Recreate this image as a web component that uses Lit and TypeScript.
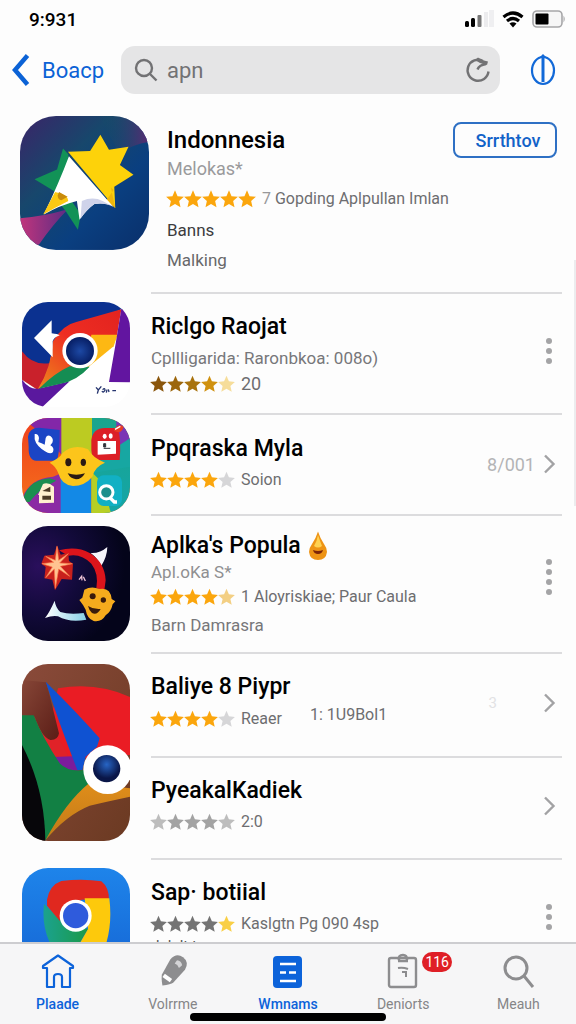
import { LitElement, html, css, svg, nothing, TemplateResult } from "lit";
import { customElement, property } from "lit/decorators.js";

const GOLD = "#fba60d";
const PALE = "#d6d6d8";
const FADED = "#f6dd9a";
const GREY = "#a3a3a3";
const DARK = "#747474";

const STAR = "M9 .8 11.4 6.3 17.4 6.9 12.9 10.9 14.2 16.8 9 13.7 3.8 16.8 5.1 10.9 .6 6.9 6.6 6.3Z";

/* ---------- artwork ---------- */

const starburstArt = html`<svg class="art" viewBox="60 48 390 405" aria-hidden="true">
  <defs>
    <linearGradient id="g" x1="0" y1="0" x2="1" y2="1">
      <stop offset="0" stop-color="#3b2468" /><stop offset=".35" stop-color="#17476c" />
      <stop offset=".65" stop-color="#0a3f80" /><stop offset="1" stop-color="#0a2f6a" />
    </linearGradient>
    <linearGradient id="p" x1="0" y1="0" x2="1" y2="0">
      <stop offset="0" stop-color="#c1357c" /><stop offset="1" stop-color="#5c2c84" />
    </linearGradient>
    <linearGradient id="t" x1="0" y1="0" x2="1" y2="0">
      <stop offset="0" stop-color="#0e5560" stop-opacity="0" /><stop offset="1" stop-color="#5a2a72" />
    </linearGradient>
  </defs>
  <rect x="60" y="48" width="390" height="405" fill="url(#g)" />
  <path d="M300 48H450V126Q400 135 360 160Z" fill="url(#t)" />
  <path d="M60 357Q130 352 205 330Q160 375 118 436L80 453H60Z" fill="url(#p)" />
  <path d="M190 146 206 164 212 300 244 345 235 392 198 335 170 300 165 276 104 239 172 210Z" fill="#129257" />
  <path d="M205 156 272 154 303 105 329 150 388 141 362 196 403 226 345 262 348 326Z" fill="#fdd20a" />
  <path d="M335 264 348 326 320 304 343 272Z" fill="#eeb60c" />
  <path d="M208 170 342 322Q318 308 285 314Q262 330 240 362L232 305Q180 318 132 346Q178 250 208 170Z" fill="#fff" />
  <path d="M247 305Q280 290 310 305L342 322Q310 308 285 314Q262 330 243 358Z" fill="#cfd3ea" />
  <path d="M166 278Q205 285 206 305Q166 325 130 346Z" fill="#fbc914" />
  <path d="M178 278 204 292 185 303Q174 300 174 288Z" fill="#c98b0b" />
</svg>`;

const arrowArt = html`<svg class="art" viewBox="37 22 324 315" aria-hidden="true">
  <defs>
    <linearGradient id="f" x1="1" y1="0" x2="0" y2="1">
      <stop offset="0" stop-color="#e2231f" /><stop offset=".5" stop-color="#ee2d22" /><stop offset="1" stop-color="#ee8a1c" />
    </linearGradient>
    <radialGradient id="e"><stop offset="0" stop-color="#1d49a5" /><stop offset="1" stop-color="#071e64" /></radialGradient>
  </defs>
  <rect x="37" y="22" width="324" height="315" fill="#fff" />
  <path d="M37 22H361V60L335 44 130 140 120 215H37Z" fill="#0b3190" />
  <path d="M37 170Q70 215 122 205L90 290 37 255Z" fill="#c9212b" />
  <path d="M37 255Q60 285 85 282L180 260 98 337H37Z" fill="#5a189e" />
  <path d="M335 44 322 122 220 225 85 282Q125 220 130 140Q160 90 200 82Z" fill="url(#f)" />
  <path d="M245 120H324L312 155 225 226Z" fill="#fdb813" />
  <path d="M88 282Q135 235 180 215L240 216Q200 260 150 268Z" fill="#158d53" />
  <path d="M335 42 361 55V263L298 262Q318 150 335 42Z" fill="#6215a0" />
  <path d="M73 130 126 77V116Q145 118 150 122 132 128 129 140V188Z" fill="#fff" />
  <circle cx="211" cy="168" r="53" fill="#fff" /><circle cx="211" cy="169" r="42" fill="url(#e)" />
  <path d="M259 278 266 286 275 275M266 286 263 297M279 285Q286 278 286 287 280 296 277 289M292 285 290 294M296 284 298 292M308 288H319" fill="none" stroke="#26356f" stroke-width="4" />
</svg>`;

const mosaicArt = html`<svg class="art" viewBox="37 24 324 285" aria-hidden="true">
  <defs>
    <linearGradient id="o" x1="0" y1="0" x2="0" y2="1"><stop offset="0" stop-color="#ef3f1d" /><stop offset="1" stop-color="#f5731b" /></linearGradient>
    <linearGradient id="q" x1="0" y1="0" x2="0" y2="1"><stop offset="0" stop-color="#1aa58d" /><stop offset="1" stop-color="#14a5a8" /></linearGradient>
  </defs>
  <rect x="37" y="24" width="324" height="285" fill="url(#o)" />
  <path d="M37 24H160V140L120 90Z" fill="#8327a8" />
  <rect x="155" y="24" width="92" height="120" fill="#bccb22" />
  <path d="M247 24H361V309H247Z" fill="url(#q)" />
  <path d="M320 24H361V90L320 150Z" fill="#7a37b5" />
  <path d="M361 85V170L250 190 260 150Z" fill="#17a7a2" />
  <path d="M37 265Q60 205 130 200L155 190V309H37Z" fill="#8b2ba4" />
  <path d="M37 280Q50 210 120 205L140 212Q90 235 60 275Z" fill="#1b8f50" />
  <rect x="153" y="205" width="92" height="104" fill="#1389e6" />
  <path d="M245 185 300 240Q290 280 305 309H245Z" fill="#b7cf25" />
  <rect x="262" y="196" width="75" height="92" rx="20" fill="#12b0c4" />
  <path d="M55 80Q60 50 95 54L150 60Q150 140 140 152H80Q55 150 57 110Z" fill="#1b45c5" />
  <path d="M245 90Q250 52 290 54H325Q335 90 330 150H270Q245 150 245 120Z" fill="#dc1f26" />
  <path d="M120 158Q150 145 158 130Q190 100 235 118Q250 145 286 158Q255 170 248 200Q225 228 190 228Q155 225 146 190Q140 170 120 158Z" fill="#fcc51b" />
  <ellipse cx="176" cy="157" rx="9" ry="12" fill="#2a1a14" /><ellipse cx="221" cy="157" rx="8" ry="11" fill="#2a1a14" />
  <path d="M174 190Q200 198 226 190Q216 208 199 208 182 206 174 190Z" fill="#2a1a14" />
  <path d="M75 72Q86 70 88 84L86 96Q96 100 105 104L108 84Q112 74 122 78Q133 86 128 98L122 106Q135 112 130 126Q122 134 106 124Q80 108 75 88Z" fill="#fff" />
  <path d="M264 93H319V131L264 134Z" fill="#fff" />
  <path d="M282 101h6v10h-6zM282 115H302" stroke="#30333a" stroke-width="3" fill="#30333a" />
  <ellipse cx="285" cy="79" rx="6" ry="8" fill="#fff" /><ellipse cx="303" cy="78" rx="6" ry="8" fill="#fff" />
  <path d="M312 62Q325 38 342 50Q335 75 312 62Z" fill="#e83c25" /><path d="M316 58 332 49" stroke="#fff" stroke-width="4" />
  <path d="M100 222Q115 215 133 230V278L88 280V255H85Z" fill="#fff1cf" />
  <path d="M98 243 122 230V246ZM98 257H124V269H98Z" fill="#4c3b26" />
  <circle cx="290" cy="247" r="20" fill="#1c8f8b" stroke="#fff" stroke-width="9" /><path d="M300 262 314 276H322" stroke="#fff" stroke-width="10" fill="none" />
</svg>`;

const orbitArt = html`<svg class="art" viewBox="37 17 324 345" aria-hidden="true">
  <defs>
    <radialGradient id="n" cx=".15" cy=".35" r=".8"><stop offset="0" stop-color="#2a0f5c" /><stop offset=".5" stop-color="#120a3a" /><stop offset="1" stop-color="#04041a" /></radialGradient>
    <linearGradient id="w" x1="0" y1="0" x2="1" y2="0"><stop offset="0" stop-color="#fff" /><stop offset="1" stop-color="#86cfe6" /></linearGradient>
  </defs>
  <rect x="37" y="17" width="324" height="345" fill="url(#n)" />
  <path d="M243 98Q270 100 293 80Q292 110 275 136Q262 112 243 98Z" fill="#f6f4fb" />
  <path d="M148 90Q200 76 240 98Q285 125 288 180L284 210 260 204Q268 160 245 130Q215 98 175 106Z" fill="#dc141b" />
  <path d="M106 293Q120 275 135 241Q138 262 152 275Q180 284 222 278L230 298Q180 308 145 288Q128 285 106 293Z" fill="url(#w)" />
  <path d="M142 75 153 103 176 98 178 122 190 130 187 178 156 176 136 210 128 178 104 174 108 140 95 130 104 106 133 103Z" fill="#c8201c" />
  <path d="M142 78 147 120 176 100 150 128 188 130 152 138 180 168 147 146 137 204 134 146 108 172 128 140 97 130 132 126 108 108 137 120Z" fill="#ffc391" stroke="#ff7d4b" stroke-width="2" />
  <path d="M208 178 216 168 217 180M221 169 227 182" fill="none" stroke="#efc4d6" stroke-width="4" />
  <path d="M224 208Q245 196 270 206Q302 200 306 236L317 243 309 252Q304 275 288 285Q276 306 252 302Q232 294 228 268L220 254 209 239 218 232Z" fill="#f6ab1d" />
  <circle cx="249" cy="228" r="9" fill="#391b0c" /><circle cx="281" cy="239" r="8" fill="#391b0c" />
  <path d="M235 257Q252 268 273 266Q262 286 247 278 238 270 235 257Z" fill="#391b0c" />
</svg>`;

const birdArt = html`<svg class="art" viewBox="37 27 324 531" aria-hidden="true">
  <defs>
    <linearGradient id="b" x1="0" y1="0" x2="1" y2="1"><stop offset="0" stop-color="#8a4a3a" /><stop offset="1" stop-color="#6b3a22" /></linearGradient>
    <linearGradient id="m" x1="0" y1="0" x2="1" y2="1"><stop offset="0" stop-color="#864637" /><stop offset="1" stop-color="#5b1d16" /></linearGradient>
    <radialGradient id="i" cx=".5" cy=".35"><stop offset="0" stop-color="#2765c5" /><stop offset="1" stop-color="#0a1648" /></radialGradient>
    <linearGradient id="k" x1="0" y1="0" x2="0" y2="1"><stop offset="0" stop-color="#e08d1a" /><stop offset="1" stop-color="#c07a18" /></linearGradient>
  </defs>
  <rect x="37" y="27" width="324" height="531" fill="url(#b)" />
  <path d="M145 100Q260 80 361 126V300H250L160 340 110 245Z" fill="#ea1c24" />
  <path d="M75 185 110 290 160 340 175 300 145 245Z" fill="#e02228" />
  <path d="M37 75 110 82 148 235Q145 256 122 255Q95 245 75 185L37 180Z" fill="url(#m)" />
  <path d="M130 306 188 304 210 346Q170 352 150 335Z" fill="#7c1c9c" />
  <path d="M37 181H72Q100 250 150 325Q175 352 225 345L245 392 107 556 37 400Z" fill="#128044" />
  <path d="M108 80Q200 170 270 250L262 275 228 305 218 345H203Q150 210 108 80Z" fill="#0f52d2" />
  <path d="M37 270Q105 400 107 558H37Z" fill="#07060a" />
  <path d="M107 556Q170 440 238 385L361 400V425Q290 440 240 452Q170 480 107 556Z" fill="url(#k)" />
  <circle cx="294" cy="344" r="73" fill="#fff" /><circle cx="291" cy="341" r="41" fill="url(#i)" />
</svg>`;

const wheelArt = html`<svg class="art" viewBox="37 37 324 324" aria-hidden="true">
  <defs>
    <linearGradient id="s" x1="0" y1="0" x2="0" y2="1"><stop offset="0" stop-color="#1e84ea" /><stop offset="1" stop-color="#1565d4" /></linearGradient>
    <linearGradient id="v" x1="0" y1="0" x2="1" y2="0"><stop offset="0" stop-color="#1ba28f" /><stop offset="1" stop-color="#1b9a48" /></linearGradient>
  </defs>
  <rect x="37" y="37" width="324" height="324" fill="url(#s)" />
  <path d="M103 145 160 200 235 220 205 270H125Q95 215 103 145Z" fill="url(#v)" />
  <path d="M112 132Q120 88 155 76Q220 68 275 77Q298 95 298 132H215L150 195 112 150Z" fill="#e0281f" />
  <path d="M225 128H299Q308 200 290 262L282 290H195L235 220Z" fill="#fdc90c" />
  <circle cx="198" cy="180" r="48" fill="#fff" /><circle cx="198" cy="180" r="38" fill="#2f5bdc" />
</svg>`;

/* ---------- data ---------- */

interface Entry {
  title: string;
  drop?: boolean;
  sub?: string;
  stars: string[];
  meta: string;
  extra?: string;
  note?: string;
  peek?: string;
  tail: "dots3" | "dots4" | "chevron";
  hint?: string;
  faint?: boolean;
  look: string;
}

interface Group { art: TemplateResult; shape: string; entries: Entry[] }

const groups: Group[] = [
  { art: arrowArt, shape: "a", entries: [
    { title: "Riclgo Raojat", sub: "Cpllligarida: Raronbkoa: 008o)", stars: ["#8a560c", "#9c660c", "#a8720d", "#d0910f", FADED], meta: "20", tail: "dots3", look: "tall" } ] },
  { art: mosaicArt, shape: "b", entries: [
    { title: "Ppqraska Myla", stars: [GOLD, GOLD, GOLD, GOLD, PALE], meta: "Soion", tail: "chevron", hint: "8/001", look: "short" } ] },
  { art: orbitArt, shape: "c", entries: [
    { title: "Aplka's Popula", drop: true, sub: "Apl.oKa S*", stars: [GOLD, GOLD, GOLD, GOLD, "#f3cf83"], meta: "1 Aloyriskiae; Paur Caula", note: "Barn Damrasra", tail: "dots4", look: "dense" } ] },
  { art: birdArt, shape: "d", entries: [
    { title: "Baliye 8 Piypr", stars: [GOLD, GOLD, GOLD, GOLD, PALE], meta: "Reaer", extra: "1: 1U9Bol1", tail: "chevron", hint: "3", faint: true, look: "plain" },
    { title: "PyeakalKadiek", stars: ["#bdbdbd", GREY, GREY, GREY, "#bdbdbd"], meta: "2:0", tail: "chevron", look: "plain" } ] },
  { art: wheelArt, shape: "e", entries: [
    { title: "Sap· botiial", stars: [DARK, DARK, DARK, DARK, "#f9cf45"], meta: "Kaslgtn Pg 090 4sp", peek: "dulult tr ·", tail: "dots3", look: "plain" } ] },
];

@customElement("star-row")
class StarRow extends LitElement {
  @property({ attribute: false }) colors: string[] = [];
  static styles = css`
    :host { display: flex; flex: none; }
    svg { display: block; width: var(--star, 17px); height: 18px; }
  `;
  render() {
    return this.colors.map((c) => html`<svg viewBox="0.5 0.5 17 17" aria-hidden="true">${svg`<path d=${STAR} fill=${c} />`}</svg>`);
  }
}

@customElement("app-art")
class AppArt extends LitElement {
  @property({ attribute: false }) art: unknown = nothing;
  static styles = css`
    :host { display: block; }
    .art { display: block; width: 100%; border-radius: var(--corner, 26px); overflow: hidden; }
  `;
  render() { return this.art; }
}

@customElement("app-root")
class AppRoot extends LitElement {
  static styles = css`
    :host { display: flex; flex-direction: column; height: 100vh; position: relative; overflow: hidden;
      background: #fdfdfd; color: #000; font-family: Roboto, "Liberation Sans", sans-serif; }
    * { box-sizing: border-box; }
    button { font: inherit; border: 0; background: none; padding: 0; cursor: pointer; color: inherit; }
    svg { display: block; flex: none; }
    h1, h2, p { margin: 0; font-weight: 400; }

    .status { display: flex; align-items: center; justify-content: space-between; height: 38px; padding: 0 10px 0 29px; }
    .time { font-size: 19px; font-weight: 500; }
    .signals { display: flex; align-items: center; gap: 8px; }

    .nav { display: flex; align-items: center; height: 64px; padding: 0 20px 0 11px; }
    .back { display: flex; align-items: center; gap: 12px; width: 110px; color: #0b62d6; font-size: 22px; }
    .search { flex: 1; min-width: 0; display: flex; align-items: center; gap: 9px; height: 48px; padding: 0 9px 0 13px;
      border-radius: 14px; background: #e5e5e6; color: #727274; }
    .search input { flex: 1; min-width: 0; border: 0; outline: 0; background: none; padding: 0; font: inherit; font-size: 22px; color: #727274; }
    .info { margin-left: 30px; color: #1269d8; }

    main { flex: 1; min-height: 0; overflow: hidden; }
    .hero { display: flex; gap: 18px; padding: 14px 19px 17px 20px; }
    .hero app-art { width: 129px; flex: none; --corner: 36px; }
    .hero .body { flex: 1; min-width: 0; padding-top: 9px; font-size: 17px; line-height: 30px; }
    .hero h1 { font-size: 24px; font-weight: 500; }
    .hero .sub { font-size: 18px; line-height: 28px; color: #9a9a9c; }
    .hero .meta { --star: 18px; line-height: 32px; }
    .hero .dark { color: #3c3c3e; }
    .hero .mid { color: #68686a; }
    .get { align-self: flex-start; width: 104px; height: 36px; margin-top: 6px; padding-left: 6px; border: 2px solid #2e70c4;
      border-radius: 8px; color: #1262c8; font-size: 18px; font-weight: 500; }
    .meta { display: flex; align-items: center; gap: 6px; margin-left: -1px; font-size: 16px; color: #6d6d70; white-space: nowrap; }
    .meta .light { color: #98989a; }
    .rule { margin: 0 14px 0 151px; height: 2px; background: #dcdcde; }

    .group { display: grid; grid-template-columns: 108px 1fr; column-gap: 21px; padding: 0 14px 0 22px; align-items: start; }
    .group app-art { margin-top: 8px; }
    .b app-art { margin-top: 3px; }
    .c app-art, .d app-art { margin-top: 10px; }
    .entry { display: flex; align-items: center; border-bottom: 2px solid #dcdcde; padding: 19px 6px 23px 0; }
    .entry .text { flex: 1; min-width: 0; font-size: 17px; line-height: 26px; }
    .entry h2 { font-size: 23px; font-weight: 500; line-height: 28px; margin-bottom: 4px; display: flex; align-items: center; gap: 7px; white-space: nowrap; }
    .tall { padding: 19px 6px 16px 0; }
    .tall .meta { font-size: 18px; }
    .short { padding: 20px 6px 21px 0; }
    .dense { padding: 15px 6px 13px 0; }
    .dense h2 { margin: 0; }
    .dense .sub { line-height: 22px; color: #8f8f91; }
    .dense .meta, .dense .note { line-height: 28px; }
    .sub, .note { color: #77777a; }
    .peek { font-size: 15px; line-height: 18px; color: #555; }
    .extra { margin-left: 22px; line-height: 20px; padding-bottom: 14px; margin-bottom: -6px; }
    .tail { display: flex; align-items: center; gap: 7px; color: #a0a0a2; }
    .tall .tail { margin-bottom: 8px; }
    .dense .tail { margin-bottom: 16px; }
    .hint { font-size: 18px; color: #b4b4b6; }
    .faint { font-size: 15px; color: #e2e2e4; margin-right: 38px; }

    .tabs { position: relative; display: grid; grid-template-columns: repeat(5, 1fr); height: 82px; border-top: 2px solid #cdcdd0; background: #f6f6f7; }
    .tab { display: flex; flex-direction: column; align-items: center; gap: 5px; padding-top: 8px; font-size: 14px; line-height: 18px; color: #858587; text-decoration: none; }
    .tab.on { color: #0c63da; font-weight: 500; }
    .glyph { position: relative; }
    .badge { position: absolute; left: 36px; top: 0; width: 30px; height: 20px; border-radius: 10px; background: #df1f26; color: #fff; font-size: 14px; line-height: 20px; text-align: center; }
    .home { position: absolute; left: 50%; bottom: 3px; width: 196px; height: 8px; transform: translateX(-50%); border-radius: 4px; background: #000; }
    .scroll { position: absolute; right: 0; top: 260px; width: 2px; height: 246px; background: #ececee; }
  `;

  private tail(e: Entry) {
    if (e.tail === "chevron") {
      return html`<button class="tail" aria-label="Open">
        ${e.hint ? html`<span class=${e.faint ? "faint" : "hint"}>${e.hint}</span>` : nothing}
        <svg width="14" height="20" viewBox="0 0 14 20" fill="none" stroke="#a2a2a4" stroke-width="2.4"><path d="M3 1.5 11.5 10 3 18.5" /></svg>
      </button>`;
    }
    const n = e.tail === "dots4" ? 4 : 3;
    const h = n * 10;
    return html`<button class="tail" aria-label="More">
      <svg width="14" height=${h} viewBox="0 0 14 ${h}" fill="#a4a4a6">${Array.from({ length: n }, (_, i) => svg`<circle cx="7" cy=${5 + i * 10} r="3" />`)}</svg>
    </button>`;
  }

  private entry(e: Entry) {
    return html`<article class="entry ${e.look}">
      <div class="text">
        <h2>${e.title}${e.drop ? html`<svg width="20" height="30" viewBox="0 0 20 30"><path d="M10 .5Q12 7 16 13 19 17 19 21 18 29 10 29 2 29 1 21 1 17 4 13 8 7 10 .5Z" fill="#ee9415" /><path d="M10 4Q12 10 14 15 10 18 6 15 9 10 10 4Z" fill="#ffd252" /><path d="M5 19Q10 21 15 19 14 23 10 23 6 23 5 19Z" fill="#7c2508" /></svg>` : nothing}</h2>
        ${e.sub ? html`<p class="sub">${e.sub}</p>` : nothing}
        <div class="meta"><star-row .colors=${e.stars}></star-row><span>${e.meta}</span>${e.extra ? html`<span class="extra">${e.extra}</span>` : nothing}</div>
        ${e.note ? html`<p class="note">${e.note}</p>` : nothing}
        ${e.peek ? html`<p class="peek">${e.peek}</p>` : nothing}
      </div>
      ${this.tail(e)}
    </article>`;
  }

  render() {
    return html`
      <div class="status">
        <span class="time">9:931</span>
        <div class="signals">
          <svg width="30" height="18" viewBox="0 0 30 18"><rect x="1" y="11" width="4" height="6" rx="1.5" /><rect x="7" y="8" width="4" height="9" rx="1.5" /><rect x="13.5" y="5" width="4" height="12" rx="1" fill="#777" /><rect x="20" y="2" width="4" height="15" fill="#ececee" /><rect x="25" y="0" width="5" height="17" fill="#efeff1" /></svg>
          <svg width="22" height="17" viewBox="0 0 22 17" fill="none" stroke="#000" stroke-width="3.2"><path d="M1.5 6Q11-2 20.5 6M5 10Q11 5 17 10" /><path d="M7.5 12.5Q11 10 14.5 12.5L11 16.5Z" fill="#000" stroke="none" /></svg>
          <svg width="34" height="18" viewBox="0 0 34 18"><rect x="1" y="1" width="29" height="16" rx="4" fill="#f6f6f6" stroke="#a6a6a8" stroke-width="1.6" /><rect x="3.5" y="3.5" width="13" height="11" rx="1" /><path d="M31.5 5.5Q34 9 31.5 12.5Z" fill="#a6a6a8" /></svg>
        </div>
      </div>
      <nav class="nav">
        <button class="back"><svg width="19" height="34" viewBox="0 0 19 34" fill="none" stroke="currentColor" stroke-width="4.5"><path d="M16.5 2.5 4 17 16.5 31.5" /></svg>Boacp</button>
        <label class="search">
          <svg width="24" height="24" viewBox="0 0 24 24" fill="none" stroke="currentColor" stroke-width="2.4"><circle cx="10" cy="10" r="8" /><path d="M16 16 22.5 22.5" /></svg>
          <input type="text" value="apn" aria-label="Search" />
          <svg width="26" height="26" viewBox="0 0 26 26" fill="none" stroke="currentColor" stroke-width="2.4"><path d="M23.5 14.5A10.5 10.5 0 1 1 18 4" /><path d="M12.5 12.5Q14 8 21 7" /><path d="M10 3 13 .5 17 3 23 4.5 22 8 15 6Z" fill="currentColor" stroke="none" /></svg>
        </label>
        <button class="info" aria-label="Info"><svg width="26" height="34" viewBox="0 0 26 34" fill="none" stroke="currentColor" stroke-width="2.2"><ellipse cx="13" cy="17.5" rx="11" ry="13.5" /><path d="M13 3V29" stroke-width="3" /><path d="M9 5 13 1 17 5Z" fill="currentColor" stroke="none" /></svg></button>
      </nav>
      <main>
        <section class="hero">
          <app-art .art=${starburstArt}></app-art>
          <div class="body">
            <h1>Indonnesia</h1>
            <p class="sub">Melokas*</p>
            <div class="meta"><star-row .colors=${Array(5).fill(GOLD)}></star-row><span><span class="light">7</span> Gopding Aplpullan Imlan</span></div>
            <p class="dark">Banns</p>
            <p class="mid">Malking</p>
          </div>
          <button class="get">Srrthtov</button>
        </section>
        <div class="rule"></div>
        ${groups.map((g) => html`<section class="group ${g.shape}"><app-art .art=${g.art}></app-art><div>${g.entries.map((e) => this.entry(e))}</div></section>`)}
      </main>
      <nav class="tabs">
        <a class="tab on" href="#home"><svg width="34" height="38" viewBox="0 0 34 38" fill="none" stroke="currentColor" stroke-width="2.2"><path d="M6 16H2V14L17 3.5 32 14V16H29V35H21V25Q21 22 17 22 13 22 13 25V35H6Z" stroke-linejoin="round" /></svg>Plaade</a>
        <a class="tab" href="#tools"><svg width="34" height="38" viewBox="0 0 34 38"><g transform="rotate(36 17 19)"><path d="M8 11Q9 2 17 2 25 2 26 11L24 28Q23 31 17 37 11 31 10 28Z" fill="#8d8d8f" /><path d="M12 26H21V30H12Z" fill="#fff" /><path d="M14 8Q18 6 21 9L20 13Q17 11 14 12Z" fill="#d4d4d6" /></g></svg>Volrrme</a>
        <a class="tab on" href="#list"><svg width="34" height="38" viewBox="0 0 34 38"><rect x="2" y="4" width="29" height="32" rx="4" fill="#0c63da" /><path d="M9 12H25M9 20.5H15M18 20.5H25M9 29H25" stroke="#fff" stroke-width="2.6" /></svg>Wmnams</a>
        <a class="tab" href="#tasks"><span class="glyph"><svg width="34" height="38" viewBox="0 0 34 38" fill="none" stroke="#8d8d8f" stroke-width="2.4"><rect x="3" y="6" width="27" height="29" rx="2" /><path d="M12 9H22M13 8Q12 3 17 3 21 3 21 8" stroke-width="2.6" /><path d="M12 16Q17 15 22 17M16 20H20V25" stroke-width="2" /></svg><span class="badge">116</span></span>Deniorts</a>
        <a class="tab" href="#search"><svg width="34" height="38" viewBox="0 0 34 38" fill="none" stroke="#8d8d8f" stroke-width="3"><circle cx="15" cy="16" r="11" /><path d="M23 24 32 35" /></svg>Meauh</a>
        <div class="home"></div>
      </nav>
      <div class="scroll"></div>
    `;
  }
}
